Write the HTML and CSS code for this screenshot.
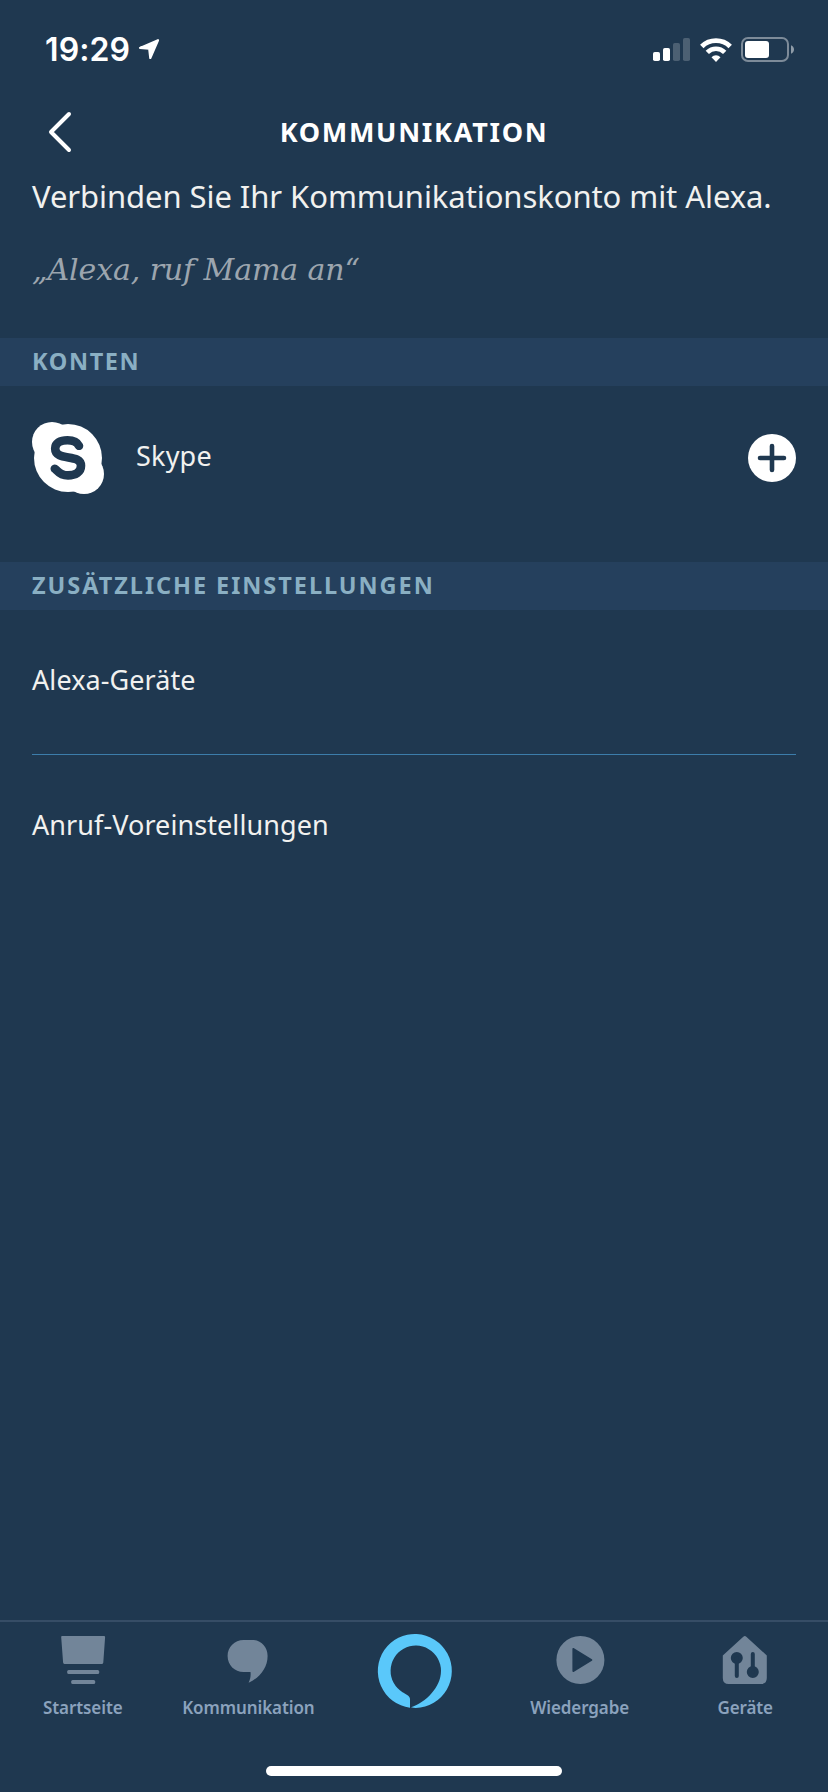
FILE: index.html
```html
<!DOCTYPE html>
<html lang="de">
<head>
<meta charset="utf-8">
<title>Kommunikation</title>
<link rel="stylesheet" href="styles.css">
</head>
<body>
<div class="screen">
  <div class="status">
    <div class="status-left">
      <span class="time">19:29</span>
      <svg class="location" width="22" height="21" viewBox="0 0 22 21"><path d="M20 1.2 2 8.9 11.2 9.6 12.3 19 20 1.2Z" fill="#fff" stroke="#fff" stroke-width="2.2" stroke-linejoin="round"/></svg>
    </div>
    <div class="status-right">
      <svg width="37" height="23" viewBox="0 0 37 23" fill="#fff"><rect y="14" width="7" height="9" rx="1.8"/><rect x="10" y="10" width="7" height="13" rx="1.8"/><g opacity=".2"><rect x="20" y="5" width="7" height="18" rx="1.8"/><rect x="30" width="7" height="23" rx="1.8"/></g></svg>
      <svg width="32" height="24" viewBox="0 0 32 24" fill="none" stroke="#fff"><path d="M1.8 8.4a20.3 20.3 0 0 1 28.4 0" stroke-width="4.9"/><path d="M7.3 14.3a12.4 12.4 0 0 1 17.4 0" stroke-width="4.7"/><path d="M11.5 19.2a6.4 6.4 0 0 1 9 0L16 24Z" fill="#fff" stroke="none"/></svg>
      <svg width="53" height="25" viewBox="0 0 53 25"><rect x="1" y="1" width="46" height="23" rx="6" fill="none" stroke="#fff" stroke-opacity=".42" stroke-width="2"/><rect x="4" y="4" width="24" height="17" rx="3" fill="#fff"/><path d="M50 8.3c4 1.6 4 6.8 0 8.4Z" fill="#fff" fill-opacity=".5"/></svg>
    </div>
  </div>

  <header class="header">
    <svg class="back" width="24" height="42" viewBox="0 0 24 42"><path d="M21 3 3 21 21 39" fill="none" stroke="#fff" stroke-width="4" stroke-linecap="round" stroke-linejoin="round"/></svg>
    <h1 class="title">KOMMUNIKATION</h1>
  </header>

  <main class="content">
    <div class="intro">
      <p class="lead">Verbinden Sie Ihr Kommunikationskonto mit Alexa.</p>
      <p class="quote">„Alexa, ruf Mama an“</p>
    </div>

    <h2 class="band">KONTEN</h2>
    <div class="account">
      <svg width="72" height="72" viewBox="0 0 72 72"><g fill="#fff"><circle cx="36" cy="36" r="34"/><circle cx="20" cy="20" r="20"/><circle cx="52" cy="52" r="20"/></g><path d="M47 23.800C45 19.800 41 18.300 35.500 18.300 28 18.300 23.200 21.300 23.200 26.500 23.200 40 49 31 49 43.800 49 50.200 43.500 53.400 36 53.400 26.500 53.400 26 48.500 22.800 46.800" fill="none" stroke="#1f3850" stroke-width="8.600" stroke-linecap="round" stroke-linejoin="round"/></svg>
      <span class="account-name">Skype</span>
      <svg width="48" height="48" viewBox="0 0 48 48"><circle cx="24" cy="24" r="24" fill="#fff"/><path d="M24 12V36M12 24H36" stroke="#1f3850" stroke-width="4.6" stroke-linecap="round"/></svg>
    </div>

    <h2 class="band band-wide">ZUSÄTZLICHE EINSTELLUNGEN</h2>
    <div class="list">
      <div class="item devices">Alexa-Geräte</div>
      <div class="item">Anruf-Voreinstellungen</div>
    </div>
  </main>

  <nav class="tabs">
    <div class="tab">
      <svg width="48" height="48" viewBox="0 0 48 48" fill="#728599"><path d="M3 0H45Q46.200 0 46.100 1.200L44.300 26.600Q44.200 28 43 28H5.400Q4.200 28 4.100 26.600L2.200 1.200Q2.100 0 3 0Z"/><rect x="8.200" y="34" width="32" height="4" rx="1.500"/><rect x="12.200" y="44" width="24" height="4" rx="1.500"/></svg>
      <span>Startseite</span>
    </div>
    <div class="tab">
      <svg width="48" height="48" viewBox="0 0 48 48" fill="#728599"><path d="M19.600 4H28C37 4 43.600 11 43.600 20 43.600 32 35.500 42 24.600 46.700 26.500 43 26.900 39 26.500 36H19.600C10.500 36 3.600 29 3.600 20S10.500 4 19.600 4Z"/></svg>
      <span>Kommunikation</span>
    </div>
    <div class="tab alexa">
      <svg width="76" height="76" viewBox="0 0 76 76"><path fill="#5ac8fa" d="M33 74.700A37 37 0 1 1 38.800 75Q36.500 75 34 74.300C49 69.500 64 54 64 38A25.200 25.200 0 1 0 25.500 59.200C28 60.700 33 62.500 33 66Z"/></svg>
    </div>
    <div class="tab">
      <svg width="48" height="48" viewBox="0 0 48 48"><circle cx="24.400" cy="24" r="24" fill="#728599"/><path d="M17.200 12.800 35.500 24 17.200 35.200Z" fill="#1f3850" stroke="#1f3850" stroke-width="1.600" stroke-linejoin="round"/></svg>
      <span>Wiedergabe</span>
    </div>
    <div class="tab">
      <svg width="48" height="48" viewBox="0 0 48 48"><path d="M22.300.700Q23.800-.700 25.300.700L45.800 19.500V42Q45.800 48 39.800 48H7.800Q1.800 48 1.800 42V19.500Z" fill="#728599"/><g fill="#1f3850" stroke="#1f3850" stroke-width="4" stroke-linecap="round"><circle cx="15.800" cy="22" r="4"/><path d="M15.800 22V40M31.800 18V36"/><circle cx="31.800" cy="36" r="4"/></g></svg>
      <span>Geräte</span>
    </div>
    <div class="home-indicator"></div>
  </nav>
</div>
</body>
</html>
```
FILE: styles.css
```css
* { box-sizing: border-box; margin: 0; padding: 0; }
body { background: #1f3850; color: #f1f1ef; font-family: "Noto Sans", "Open Sans", sans-serif; }
svg { display: block; flex: none; overflow: visible; }
.screen { width: 828px; height: 1792px; display: flex; flex-direction: column; overflow: hidden; }

.status { height: 88px; padding: 11px 34px 0 45px; display: flex; justify-content: space-between; align-items: center; color: #fff; }
.status-left, .status-right { display: flex; align-items: center; }
.status-left { gap: 8px; }
.status-right { gap: 9.5px; }
.time { font: 600 32px/40px Inter, sans-serif; letter-spacing: 0.1px; }

.header { height: 86px; padding: 2px 48px 0; display: grid; grid-template-columns: 24px 1fr 24px; align-items: center; }
.title { color: #fff; font-size: 27px; line-height: 40px; font-weight: 700; letter-spacing: 1.7px; text-align: center; }

.content { flex: 1; }
.intro { height: 164px; padding: 0 32px; white-space: nowrap; }
.lead { font-size: 31px; line-height: 44px; letter-spacing: -0.07px; }
.quote { margin-top: 30px; color: #9ca5ae; font: italic 30px/44px "DejaVu Serif", serif; letter-spacing: -0.1px; }

.band { height: 48px; padding: 0 32px; background: #25405d; color: #8aafc3; font-size: 23.5px; line-height: 46px; font-weight: 700; letter-spacing: 1.6px; white-space: nowrap; }
.band-wide { letter-spacing: 1.95px; }
.account { height: 176px; padding: 36px 32px 68px; display: flex; align-items: center; gap: 32px; }
.account-name { flex: 1; padding-bottom: 5px; font-size: 27px; line-height: 40px; letter-spacing: 0.2px; }
.list { padding: 0 32px; }
.item { height: 144px; padding-bottom: 5px; display: flex; align-items: center; font-size: 27px; letter-spacing: 0.08px; }
.devices { height: 145px; border-bottom: 1px solid #3c7dab; }

.tabs { height: 172px; border-top: 2px solid #364d66; display: grid; grid-template-columns: repeat(5, 1fr); grid-template-rows: 144px 10px; }
.tab { padding-top: 14px; display: flex; flex-direction: column; align-items: center; gap: 12px; color: #8ba2bd; font-size: 17px; line-height: 24px; font-weight: 600; letter-spacing: -0.1px; }
.alexa { padding: 11px 0 0 2px; }
.home-indicator { grid-column: 1 / -1; justify-self: center; width: 296px; height: 10px; border-radius: 5px; background: #fff; }
```
